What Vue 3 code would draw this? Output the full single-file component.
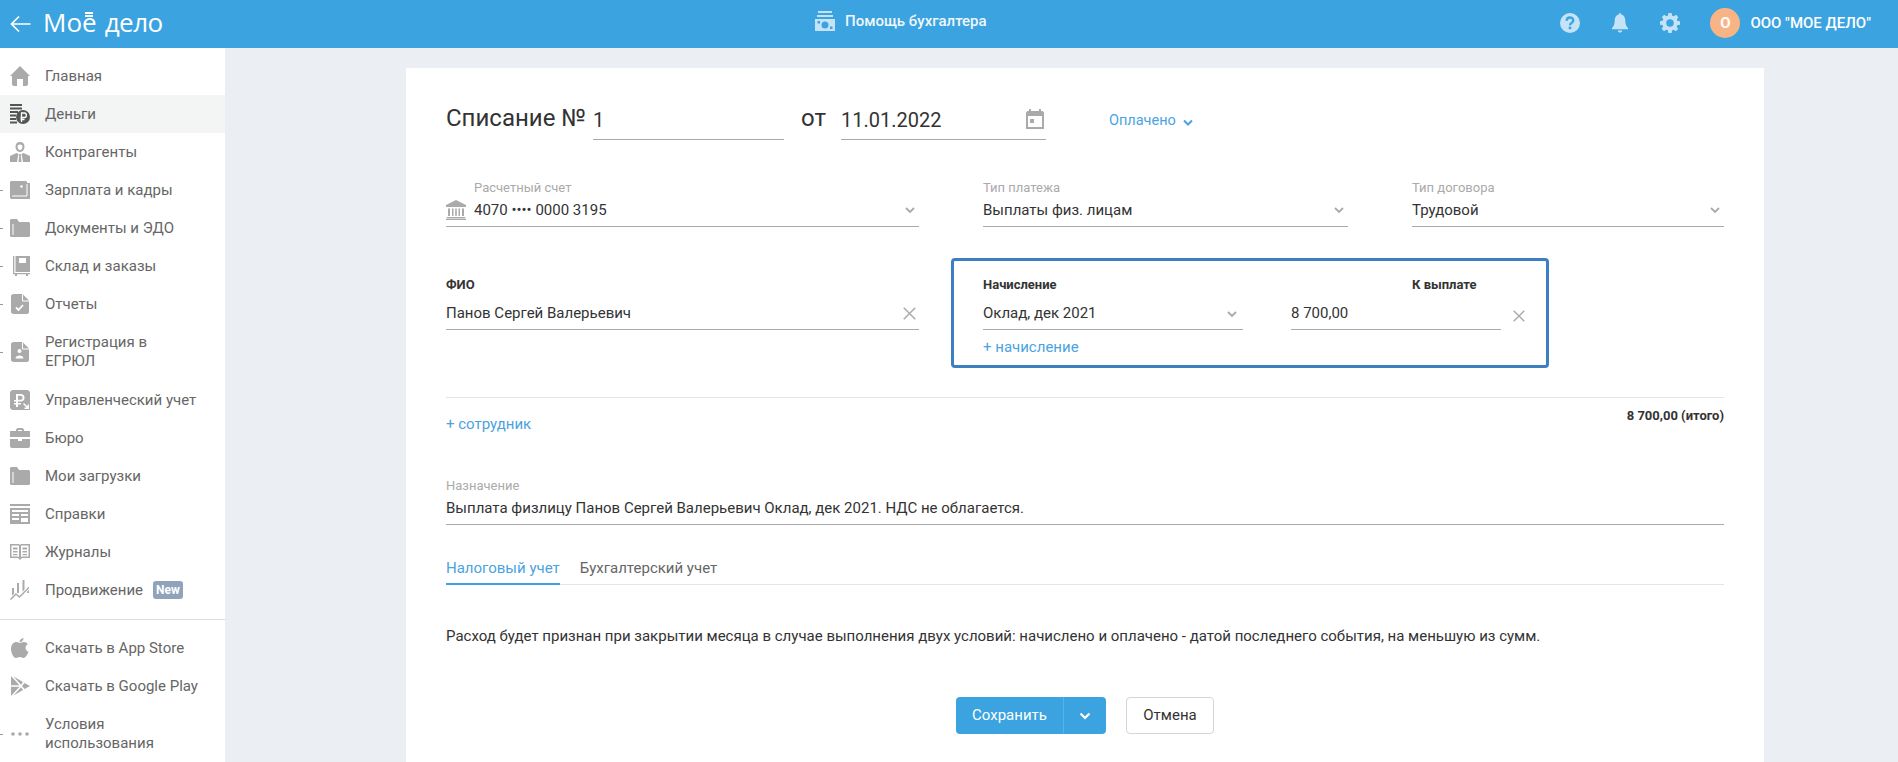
<script setup>
const items = [
  { t: 'Главная', i: 'home' },
  { t: 'Деньги', i: 'money', active: true },
  { t: 'Контрагенты', i: 'person' },
  { t: 'Зарплата и кадры', i: 'wallet', tick: true },
  { t: 'Документы и ЭДО', i: 'folder', tick: true },
  { t: 'Склад и заказы', i: 'store', tick: true },
  { t: 'Отчеты', i: 'report', tick: true },
  { t: 'Регистрация в ЕГРЮЛ', i: 'reg', tick: true, two: true },
  { t: 'Управленческий учет', i: 'rub' },
  { t: 'Бюро', i: 'case' },
  { t: 'Мои загрузки', i: 'folder' },
  { t: 'Справки', i: 'ref' },
  { t: 'Журналы', i: 'book' },
  { t: 'Продвижение', i: 'chart', badge: 'New' }
]
const bottom = [
  { t: 'Скачать в App Store', i: 'apple' },
  { t: 'Скачать в Google Play', i: 'play' },
  { t: 'Условия использования', i: 'dots', tick: true, two: true }
]
</script>

<template>
  <div class="page">
    <header class="top">
      <div class="top-left">
        <svg class="back" width="22" height="18" viewBox="0 0 22 18"><path d="M10 1.500 2.500 9 10 16.500M2.500 9H21.500" fill="none" stroke="#fff" stroke-width="1.700"/></svg>
        <span class="logo">Мо<span class="e">е<i class="bars"></i></span><span class="logo-b">дело</span></span>
      </div>
      <div class="top-mid">
        <svg width="20" height="20" viewBox="0 0 20 20" fill="#c5e3f6"><rect x="3" y="0" width="14" height="2"/><rect x="2" y="4" width="16" height="2"/><path fill-rule="evenodd" d="M0 8h20v12H0zM10 10.500a3.500 3.500 0 1 0 0 7 3.500 3.500 0 0 0 0-7zM2.500 10v2.500h2.500V10zM15 15.500V18h2.500v-2.500z"/></svg>
        <span>Помощь бухгалтера</span>
      </div>
      <div class="top-right">
        <svg class="ti" width="20" height="20" viewBox="0 0 22 22"><circle cx="11" cy="11" r="11" fill="#c5e3f6"/><path d="M7.400 8.400c0-4.600 7.200-4.600 7.200-.2 0 2.700-3.600 2.700-3.600 5.300" fill="none" stroke="#3ba3df" stroke-width="2.600"/><rect x="9.600" y="15" width="2.800" height="2.800" fill="#3ba3df"/></svg>
        <svg class="ti" width="16" height="20" viewBox="0 0 18 22" fill="#c5e3f6"><path d="M9 0c1 0 1.500.6 1.500 1.400C13.500 2 15 5 15 8.500c0 4 1 6 3 8v1.500H0v-1.500c2-2 3-4 3-8C3 5 4.500 2 7.500 1.400 7.500.6 8 0 9 0z"/><path d="M6.500 19.300h5c-.5 3.200-4.500 3.200-5 0z"/></svg>
        <svg class="ti gear" width="20" height="20" viewBox="0 0 24 24" fill="#c5e3f6"><path fill-rule="evenodd" d="M10 0h4l.6 3.200 1.900.8 2.700-1.800 2.800 2.800-1.800 2.700.8 1.900L24 10v4l-3.200.6-.8 1.900 1.800 2.700-2.800 2.800-2.700-1.800-1.900.8L14 24h-4l-.6-3.200-1.900-.8-2.700 1.800-2.800-2.800 1.800-2.700-.8-1.900L0 14v-4l3.200-.6.800-1.900L2.200 4.800 5 2l2.700 1.800 1.900-.8zM12 7.500a4.500 4.500 0 1 0 0 9 4.500 4.500 0 0 0 0-9z"/></svg>
        <span class="avatar">О</span>
        <span class="org">ООО "МОЕ ДЕЛО"</span>
      </div>
    </header>

    <div class="body">
      <nav class="side">
        <div class="nav-group">
          <a v-for="it in items" :key="it.t" class="nav" :class="{ active: it.active, tick: it.tick, two: it.two }">
            <svg class="ico" width="20" height="20" viewBox="0 0 20 20" :fill="it.active ? '#555' : '#aaa'">
              <path v-if="it.i === 'home'" d="M10 0 20 10h-2v8c0 1-1 2-2 2h-3v-7H7v7H4c-1 0-2-1-2-2v-8H0z"/>
              <template v-else-if="it.i === 'money'">
                <path d="M0 0h12v2H0zM0 3.500h12v2H0zM0 7h8v2H0zM0 10.500h6v2H0zM0 14h6v2H0zM0 17.500h7v2H0z"/>
                <circle cx="13" cy="13" r="7"/>
                <path d="M11.500 18v-9h3c2.500 0 2.500 4.500 0 4.500h-4M10.500 15.500h4" fill="none" stroke="#fff" stroke-width="1.300"/>
              </template>
              <template v-else-if="it.i === 'person'">
                <path fill-rule="evenodd" d="M10 0c3 0 4.500 2 4.500 4.500S13 10 10 10 5.500 7 5.500 4.500 7 0 10 0zm0 2.500c-1.500 0-2.500.7-2.500 2.200S8.500 8 10 8s2.500-1.800 2.500-3.300S11.500 2.500 10 2.500z"/>
                <path d="M6.500 11 0 14v6h7l1.500-8zM13.500 11l6.500 3v6h-7l-1.500-8zM9 12h2l-.2 2 .7 6h-3l.7-6z"/>
              </template>
              <template v-else-if="it.i === 'wallet'">
                <path d="M0 2l1-1h15l1 1v1h3v16H1l-1-1z"/>
                <path d="M17 4v12H2" fill="none" stroke="#fff"/>
                <circle cx="11.500" cy="6.500" r="1.200" fill="#fff"/>
              </template>
              <path v-else-if="it.i === 'folder'" d="M1 1h6l2 3h10l1 1v13l-1 1H1l-1-1V2zM2.500 6v11h1V6z" fill-rule="evenodd"/>
              <template v-else-if="it.i === 'store'">
                <path d="M3 0h1.300v17H20v1.300h-2V20h-2v-1.700H7V20H5v-1.700H3z"/>
                <path fill-rule="evenodd" d="M5.500 0H20v16H5.500zM9 2v5h7V2z"/>
              </template>
              <template v-else-if="it.i === 'report'">
                <path d="M3 0h9.500L19 6.500V18.500L17.500 20H3l-2-1.500V1.500z"/>
                <path d="M12.500 .5V7H19" fill="none" stroke="#fff"/>
                <path d="M6 13.500l2.500 2.500 4.500-5" fill="none" stroke="#fff" stroke-width="1.800"/>
              </template>
              <template v-else-if="it.i === 'reg'">
                <path d="M3 0h9.500L19 6.500V18.500L17.500 20H3l-2-1.500V1.500z"/>
                <path d="M12.500 .5V7H19" fill="none" stroke="#fff"/>
                <circle cx="9.500" cy="9" r="2" fill="#fff"/>
                <path d="M5.500 16.500c0-4 8-4 8 0z" fill="#fff"/>
              </template>
              <path v-else-if="it.i === 'rub'" fill-rule="evenodd" d="M2 0h16l2 2v18H2l-2-2V2zM6 4v6H4v1.500h2V13H4v1.500h2V17h2v-2.500h3V13H8v-1.500h2.500c3 0 4-1.700 4-3.700S13.500 4 10.500 4zM8 5.800h2.500c1.500 0 2 1 2 2s-.5 2-2 2H8zM14 13l-1 1 3.500 3.500H14.500V19H19v-4.500h-1.500v2z"/>
              <path v-else-if="it.i === 'case'" d="M6 2c0-1 1-2 2-2h4c1 0 2 1 2 2v1h6v6H0V3h6zM8 2v1h4V2zM0 11h8v2h4v-2h8v7c0 1-1 2-2 2H2c-1 0-2-1-2-2z" fill-rule="evenodd"/>
              <path v-else-if="it.i === 'ref'" fill-rule="evenodd" d="M0 0h20v2H0zM0 4h20v16H0zM2 6v2h16V6zM2 10v2h7v-2zM11 10v2h7v-2zM2 14v2h7v-2zM11 14v4h7v-4z"/>
              <path v-else-if="it.i === 'book'" fill-rule="evenodd" d="M0 2h9l1 1 1-1h9v14h-8l-2 2-2-2H0zM1.500 3.500v11H8l1 .5V4l-.5-.5zM11.500 3.500 11 4v11l1-.5h6.500v-11zM3 5.500h4.500v2H3zM12.500 5.500H17v2h-4.500zM3 9h4.500v1.500H3zM12.500 9H17v1.500h-4.500zM3 12h4.500v1.300H3zM12.500 12H17v1.300h-4.500z"/>
              <template v-else-if="it.i === 'chart'">
                <path d="M2 8h2v8H2zM7 3h2v10H7zM12.500 0h2v12h-2zM17 7h2v6h-2z"/>
                <path d="M.5 19.500 6 14l3.500 3L18.500 8" fill="none" stroke="#fff" stroke-width="3.200"/>
                <path d="M.5 19.500 6 14l3.500 3L18.500 8" fill="none" stroke="#aaa" stroke-width="1.500"/>
              </template>
            </svg>
            <span class="nav-t">{{ it.t }}</span>
            <span v-if="it.badge" class="badge">{{ it.badge }}</span>
          </a>
        </div>
        <div class="nav-sep"></div>
        <div class="nav-group">
          <a v-for="it in bottom" :key="it.t" class="nav" :class="{ tick: it.tick, two: it.two }">
            <svg class="ico" width="20" height="20" viewBox="0 0 20 20" fill="#aaa">
              <path v-if="it.i === 'apple'" d="M13.500 0c.2 2.200-1.800 4.300-4 4.200C9.300 2.100 11.300.2 13.500 0zM10 5c1 0 2-1 4-1 1.500 0 3 .8 3.800 2.200-3.300 1.800-2.800 6.300.7 7.600-.9 2.200-2.700 6.200-5 6.200-1.500 0-2.200-1-3.700-1s-2.400 1-3.800 1C3.500 20 1 15 1 11c0-4.500 2.800-7 5.500-7C8 4 9 5 10 5z"/>
              <path v-else-if="it.i === 'play'" d="M1 0 9.500 9.200H1zM1 10.800h8.500L1 20zM3.500.5 13 6l-2 2.700zM11 11.300l2 2.700-9.500 5.500zM14.500 7l5.500 3-5.500 3-2.500-3z"/>
              <template v-else><circle cx="3" cy="10" r="1.800"/><circle cx="10" cy="10" r="1.800"/><circle cx="17" cy="10" r="1.800"/></template>
            </svg>
            <span class="nav-t">{{ it.t }}</span>
          </a>
        </div>
      </nav>

      <main class="main">
        <section class="card">
          <div class="r1">
            <span class="title">Списание №</span>
            <div class="u in-num">1</div>
            <span class="title ot">от</span>
            <div class="u in-date">
              <span>11.01.2022</span>
              <svg width="18" height="20" viewBox="0 0 18 20" fill="#aaa"><path fill-rule="evenodd" d="M3 0h2v2h8V0h2v2h1.500L18 3.500V20H0V3.500L1.500 2H3zM2 7v11h14V7zM4 10h4v4H4z"/></svg>
            </div>
            <span class="status">Оплачено <svg width="10" height="7" viewBox="0 0 10 7"><path d="M1 1.500 5 5.500 9 1.500" fill="none" stroke="#4aa3df" stroke-width="2"/></svg></span>
          </div>

          <div class="r2">
            <div class="f f-acc">
              <svg class="bank" width="20" height="20" viewBox="0 0 20 20" fill="#aaa"><path d="M10 0 20 5v2H0V5zM2 8.500h2v7.500H2zM6 8.500h1.500v7.500H6zM9.200 8.500h1.600v7.500H9.200zM12.500 8.500H14v7.500h-1.500zM16 8.500h2v7.500h-2zM1 17h18v1H1zM0 18.500h20V20H0z"/></svg>
              <div class="f-in">
                <label>Расчетный счет</label>
                <div class="v">4070 •••• 0000 3195 <svg class="ch" width="10" height="7" viewBox="0 0 10 7"><path d="M1 1 5 5 9 1" fill="none" stroke="#aaa" stroke-width="1.800"/></svg></div>
              </div>
            </div>
            <div class="f f-type">
              <div class="f-in">
                <label>Тип платежа</label>
                <div class="v">Выплаты физ. лицам <svg class="ch" width="10" height="7" viewBox="0 0 10 7"><path d="M1 1 5 5 9 1" fill="none" stroke="#aaa" stroke-width="1.800"/></svg></div>
              </div>
            </div>
            <div class="f f-dog">
              <div class="f-in">
                <label>Тип договора</label>
                <div class="v">Трудовой <svg class="ch" width="10" height="7" viewBox="0 0 10 7"><path d="M1 1 5 5 9 1" fill="none" stroke="#aaa" stroke-width="1.800"/></svg></div>
              </div>
            </div>
          </div>

          <div class="r3">
            <div class="fio">
              <div class="b-label">ФИО</div>
              <div class="v fio-v">Панов Сергей Валерьевич <svg width="13" height="13" viewBox="0 0 12 12"><path d="M.7.7l10.600 10.600M11.300.7.7 11.300" stroke="#aaa" stroke-width="1.400"/></svg></div>
            </div>
            <div class="box">
              <div class="box-l">
                <div class="b-label">Начисление</div>
                <div class="v box-sel">Оклад, дек 2021 <svg class="ch" width="10" height="7" viewBox="0 0 10 7"><path d="M1 1 5 5 9 1" fill="none" stroke="#aaa" stroke-width="1.800"/></svg></div>
                <div class="link add">+ начисление</div>
              </div>
              <div class="box-r">
                <div class="b-label pay">К выплате</div>
                <div class="v box-sum">8 700,00</div>
              </div>
              <svg class="x" width="12" height="12" viewBox="0 0 12 12"><path d="M.7.7l10.600 10.600M11.300.7.7 11.300" stroke="#aaa" stroke-width="1.400"/></svg>
            </div>
          </div>

          <div class="r4">
            <span class="link">+ сотрудник</span>
            <span class="total">8 700,00 (итого)</span>
          </div>

          <div class="purpose">
            <label>Назначение</label>
            <div class="v">Выплата физлицу Панов Сергей Валерьевич Оклад, дек 2021. НДС не облагается.</div>
          </div>

          <div class="tabs">
            <span class="tab on">Налоговый учет</span>
            <span class="tab">Бухгалтерский учет</span>
          </div>

          <p class="note">Расход будет признан при закрытии месяца в случае выполнения двух условий: начислено и оплачено - датой последнего события, на меньшую из сумм.</p>

          <div class="btns">
            <div class="save">
              <span class="save-a">Сохранить</span>
              <span class="save-b"><svg width="12" height="8" viewBox="0 0 12 8"><path d="M1.500 1.500 6 6l4.500-4.500" fill="none" stroke="#fff" stroke-width="2.200"/></svg></span>
            </div>
            <span class="cancel">Отмена</span>
          </div>
        </section>
      </main>
    </div>
  </div>
</template>

<style>
html, body { margin: 0; height: 100%; overflow: hidden; }
</style>

<style scoped>
.page { width: 1898px; height: 762px; overflow: hidden; background: #ebeff3; font-family: Roboto, "Noto Sans", sans-serif; color: #333; font-size: 15px; }
.top { height: 48px; background: #3ba3df; color: #fff; display: flex; align-items: center; position: relative; }
.top-left { display: flex; align-items: center; padding-left: 9px; }
.back { margin-right: 12px; }
.logo { font-family: "Open Sans", Roboto, sans-serif; font-weight: 500; font-size: 26px; line-height: 44px; margin-top: -4px; white-space: nowrap; display: flex; }
.e { display: block; position: relative; }
.logo-b { margin-left: 8px; letter-spacing: -.5px; }
.bars { position: absolute; left: 3px; top: 12px; width: 8px; height: 2px; background: #fff; box-shadow: 0 3px 0 #fff; }
.top-mid { position: absolute; left: 815px; top: 0; height: 42px; display: flex; align-items: center; gap: 10px; font-weight: 500; font-size: 15px; color: #eef7fd; }
.top-right { margin-left: auto; display: flex; align-items: center; padding: 0 27px 2px 0; }
.ti { margin-right: 32px; }
.ti.gear { margin-right: 30px; }
.avatar { width: 30px; height: 30px; border-radius: 50%; background: #f9b485; color: #fff; font-weight: 700; font-size: 15px; display: flex; align-items: center; justify-content: center; margin-right: 10px; }
.org { font-weight: 500; font-size: 15px; }

.body { display: flex; height: 714px; }
.side { width: 225px; flex: none; background: #fff; box-sizing: border-box; padding-top: 9px; overflow: hidden; }
.nav { display: flex; align-items: center; height: 38px; padding-left: 10px; position: relative; color: #666; font-size: 15px; line-height: 19px; }
.nav.two { height: 58px; }
.nav.active { background: #f3f4f4; }
.nav.tick::before { content: ""; position: absolute; left: 0; top: 50%; width: 3px; height: 1px; background: #999; }
.ico { flex: none; margin-right: 15px; }
.nav.two .nav-t { width: 130px; }
.badge { background: #8fa3bb; color: #fff; font-size: 12px; font-weight: 700; line-height: 18px; height: 18px; width: 30px; text-align: center; border-radius: 3px; margin-left: 10px; }
.nav-sep { height: 1px; background: #ddd; margin: 10px 0 9px; }

.main { flex: 1; padding: 20px 0 0 181px; min-width: 0; }
.card { width: 1358px; height: 720px; background: #fff; box-sizing: border-box; padding: 0 40px; }

.r1 { display: flex; align-items: flex-start; height: 72px; }
.title { font-size: 24px; line-height: 28px; margin-top: 36px; color: #333; }
.u { border-bottom: 1px solid #aaa; box-sizing: border-box; height: 42px; margin-top: 30px; font-size: 20px; line-height: 40px; padding-top: 2px; }
.in-num { width: 191px; margin-left: 7px; }
.ot { margin-left: 17px; }
.in-date { width: 205px; margin-left: 15px; display: flex; justify-content: space-between; align-items: center; padding-right: 2px; }
.in-date svg { margin-top: -2px; }
.status { margin: 45px 0 0 63px; color: #4aa3df; font-size: 14.500px; line-height: 16px; display: flex; align-items: center; gap: 7px; }
.status svg { margin-top: 3px; }

.r2 { display: flex; margin-top: 40px; }
.f { display: flex; position: relative; border-bottom: 1px solid #aaa; height: 47px; box-sizing: border-box; align-items: flex-end; }
.f-in { flex: 1; min-width: 0; }
label { display: block; color: #aaa; font-size: 13px; line-height: 14px; margin-bottom: 5px; }
.v { font-size: 15px; line-height: 20px; color: #333; position: relative; }
.f .v { padding-bottom: 6px; }
.ch { position: absolute; right: 4px; top: 7px; }
.f-acc { width: 473px; margin-right: 64px; }
.bank { position: absolute; left: 0; bottom: 6px; }
.f-acc .f-in { margin-left: 28px; }
.f-type { width: 365px; margin-right: 64px; }
.f-dog { width: 312px; }

.r3 { display: flex; margin-top: 31px; align-items: flex-start; }
.fio { width: 473px; margin-right: 32px; padding-top: 20px; }
.b-label { font-size: 13px; font-weight: 700; line-height: 14px; color: #333; }
.fio-v { border-bottom: 1px solid #aaa; margin-top: 8px; height: 30px; box-sizing: border-box; padding-top: 3px; }
.fio-v svg { position: absolute; right: 3px; top: 7px; }
.box { width: 598px; height: 110px; box-sizing: border-box; border: 3px solid #3d7fc1; border-radius: 4px; position: relative; display: flex; padding: 17px 0 0 29px; }
.box-l { width: 260px; margin-right: 48px; }
.box-sel { margin-top: 8px; height: 30px; box-sizing: border-box; border-bottom: 1px solid #aaa; padding-top: 3px; }
.box-sel .ch { right: 6px; top: 11px; }
.add { margin-top: 9px; }
.box-r { width: 210px; }
.pay { margin-left: 121px; white-space: nowrap; }
.box-sum { margin-top: 8px; height: 30px; box-sizing: border-box; border-bottom: 1px solid #aaa; padding-top: 3px; }
.x { position: absolute; left: 559px; top: 49px; }
.link { color: #4aa3df; font-size: 15px; line-height: 16px; }

.r4 { margin-top: 29px; border-top: 1px solid #e5e5e5; display: flex; justify-content: space-between; align-items: flex-start; height: 63px; }
.r4 .link { margin-top: 18px; }
.total { font-size: 13px; font-weight: 700; line-height: 14px; margin-top: 11px; color: #333; }

.purpose { margin-top: 18px; border-bottom: 1px solid #aaa; height: 46px; box-sizing: border-box; }
.tabs { display: flex; gap: 20px; margin-top: 30px; border-bottom: 1px solid #e5e5e5; height: 29px; }
.tab { color: #666; font-size: 15px; line-height: 22px; height: 30px; padding-top: 2px; box-sizing: border-box; }
.tab.on { color: #4aa3df; border-bottom: 2px solid #3ba3df; }
.note { margin: 0; padding-top: 41px; font-size: 15px; line-height: 20px; color: #333; }
.btns { display: flex; margin-top: 51px; padding-left: 510px; gap: 20px; align-items: flex-start; }
.save { display: flex; height: 37px; background: #3ba3df; border-radius: 4px; color: #fff; font-size: 15px; line-height: 36px; }
.save-a { width: 108px; text-align: center; border-right: 1px solid #56b3ea; box-sizing: border-box; }
.save-b { width: 42px; display: flex; align-items: center; justify-content: center; }
.cancel { width: 88px; height: 37px; box-sizing: border-box; border: 1px solid #d5d5d5; border-radius: 4px; text-align: center; line-height: 35px; color: #333; }
</style>
